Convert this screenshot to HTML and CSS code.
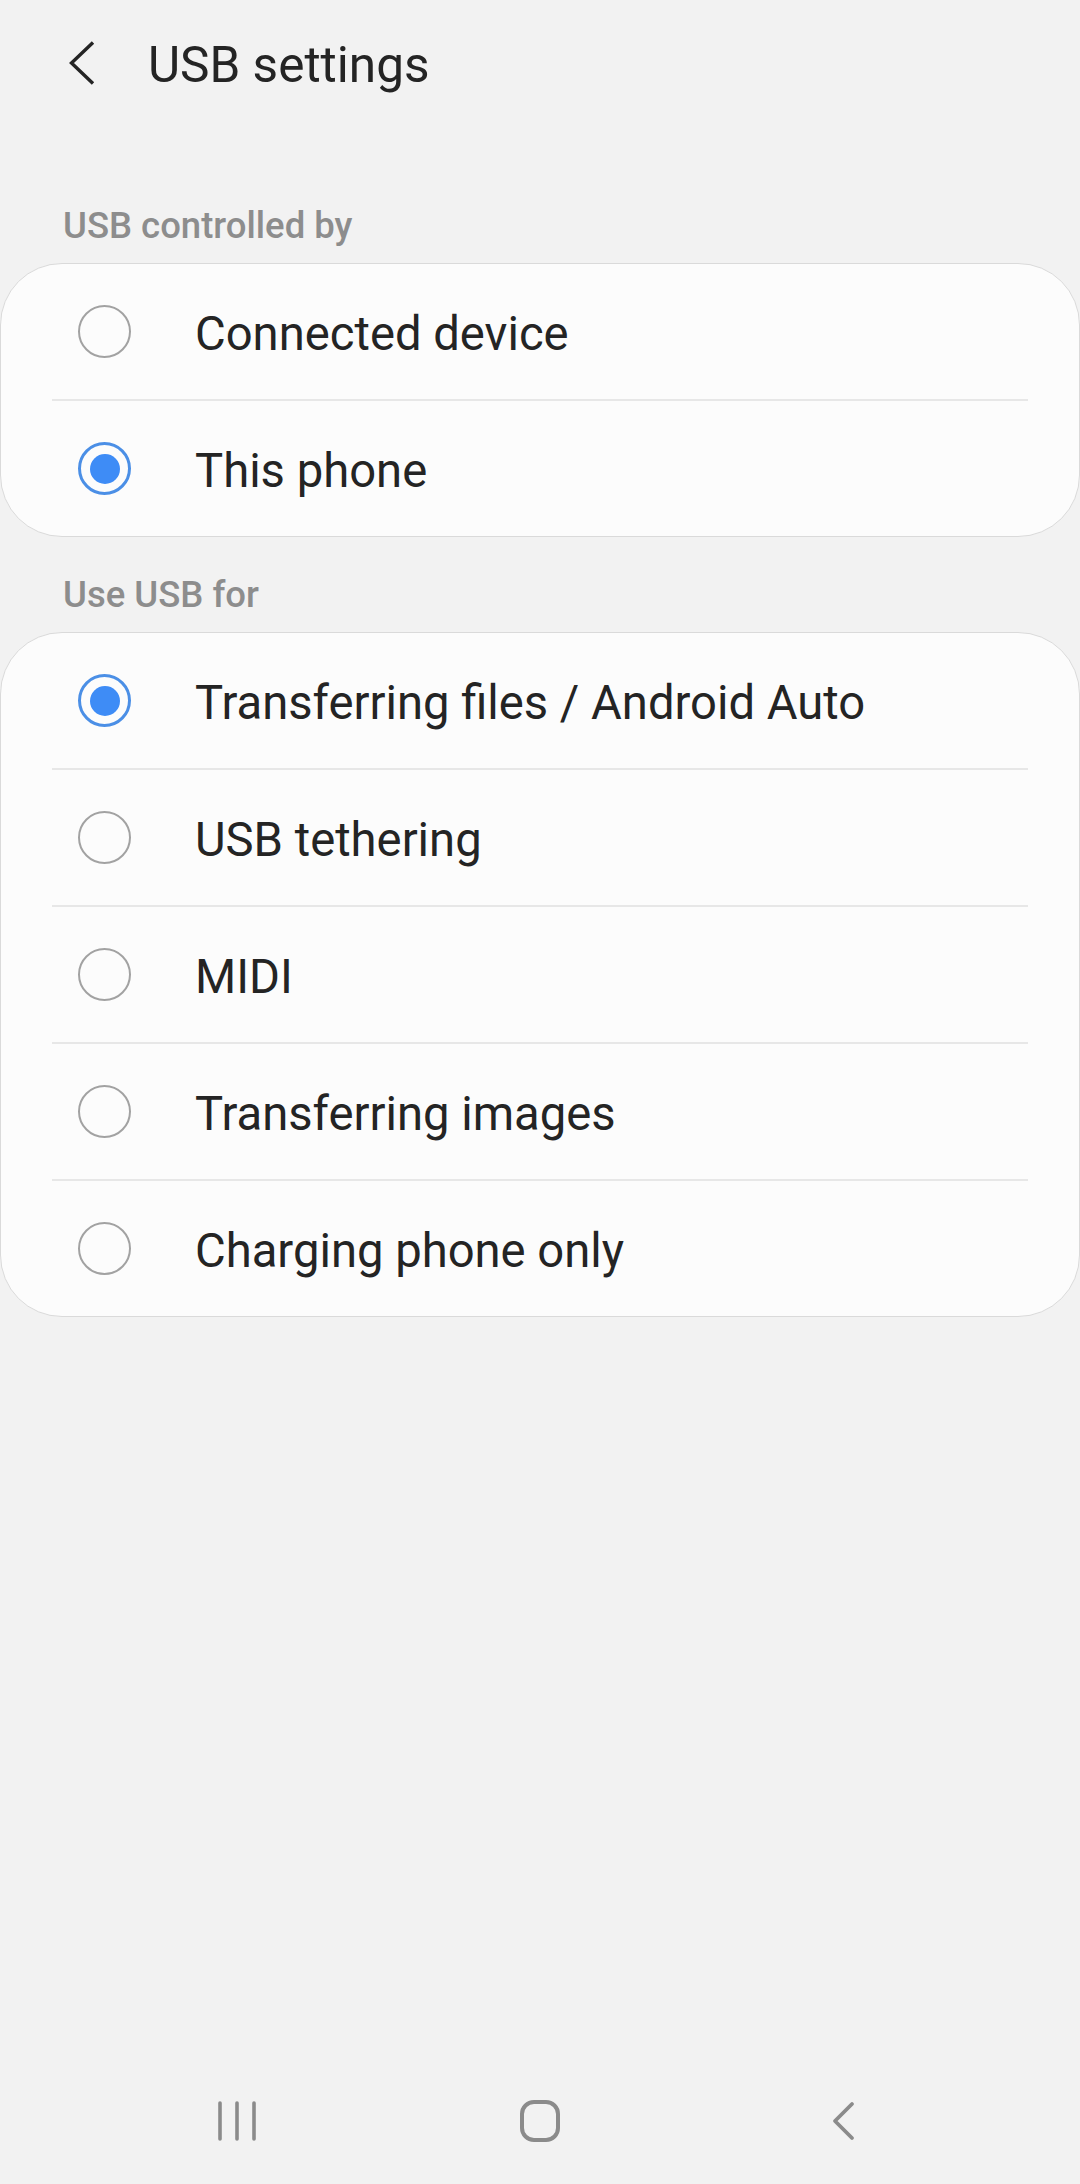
FILE: index.html
```html
<!DOCTYPE html>
<html lang="en">
<head>
<meta charset="utf-8">
<title>USB settings</title>
<link rel="stylesheet" href="styles.css">
</head>
<body>
<div class="screen">
  <main class="content">
    <header class="appbar">
      <svg class="back" width="28" height="46" viewBox="0 0 28 46" aria-hidden="true">
        <path d="M25 2.5 L3.5 23 L25 43.5" fill="none" stroke="#242424" stroke-width="3.4" stroke-linejoin="miter"/>
      </svg>
      <h1 class="title">USB settings</h1>
    </header>

    <h2 class="section-title first">USB controlled by</h2>
    <section class="card">
      <div class="row">
        <span class="radio"></span>
        <span class="label">Connected device</span>
      </div>
      <div class="divider"></div>
      <div class="row">
        <span class="radio checked"></span>
        <span class="label">This phone</span>
      </div>
    </section>

    <h2 class="section-title">Use USB for</h2>
    <section class="card">
      <div class="row">
        <span class="radio checked"></span>
        <span class="label">Transferring files / Android Auto</span>
      </div>
      <div class="divider"></div>
      <div class="row">
        <span class="radio"></span>
        <span class="label">USB tethering</span>
      </div>
      <div class="divider"></div>
      <div class="row">
        <span class="radio"></span>
        <span class="label">MIDI</span>
      </div>
      <div class="divider"></div>
      <div class="row">
        <span class="radio"></span>
        <span class="label">Transferring images</span>
      </div>
      <div class="divider"></div>
      <div class="row">
        <span class="radio"></span>
        <span class="label">Charging phone only</span>
      </div>
    </section>
  </main>

  <nav class="navbar">
    <div class="nav-cell">
      <svg width="40" height="42" viewBox="0 0 40 42" aria-hidden="true">
        <g stroke="#8b8b8b" stroke-width="3.6" stroke-linecap="round">
          <line x1="3" y1="3" x2="3" y2="39"/>
          <line x1="20" y1="3" x2="20" y2="39"/>
          <line x1="37" y1="3" x2="37" y2="39"/>
        </g>
      </svg>
    </div>
    <div class="nav-cell">
      <svg width="44" height="46" viewBox="0 0 44 46" aria-hidden="true">
        <rect x="4" y="4" width="36" height="38" rx="12" ry="12" fill="none" stroke="#8b8b8b" stroke-width="4"/>
      </svg>
    </div>
    <div class="nav-cell">
      <svg width="26" height="42" viewBox="0 0 26 42" aria-hidden="true">
        <path d="M22 4 L5 21 L22 38" fill="none" stroke="#8b8b8b" stroke-width="3.8" stroke-linecap="round" stroke-linejoin="round"/>
      </svg>
    </div>
  </nav>
</div>
</body>
</html>
```

FILE: styles.css
```css
* {
  box-sizing: border-box;
}

html, body {
  margin: 0;
  padding: 0;
  background: #f2f2f2;
}

body {
  font-family: Roboto, "Noto Sans", "Liberation Sans", sans-serif;
  color: #242424;
}

.screen {
  display: flex;
  flex-direction: column;
  width: 1080px;
  height: 2184px;
}

.content {
  flex: 1;
}

.appbar {
  display: flex;
  align-items: center;
  height: 130px;
  padding-left: 68px;
}

.back {
  display: block;
  margin-top: -5px;
}

.title {
  margin: 0 0 0 52px;
  font-size: 49.5px;
  line-height: 60px;
  font-weight: 400;
  color: #242424;
}

.section-title {
  margin: 36px 0 0 0;
  padding-left: 63px;
  font-size: 36.5px;
  line-height: 44px;
  font-weight: 500;
  color: #8d8d8d;
}

.section-title.first {
  margin-top: 74px;
}

.card {
  margin-top: 15px;
  background: #fcfcfc;
  border: 1px solid #dadada;
  border-radius: 62px;
}

.row {
  display: flex;
  align-items: center;
  height: 135px;
  padding-left: 77px;
}

.radio {
  flex: none;
  width: 53px;
  height: 53px;
  border-radius: 50%;
  border: 2.7px solid #a2a2a2;
  display: flex;
  align-items: center;
  justify-content: center;
}

.radio.checked {
  border: 3px solid #4b8fe6;
}

.radio.checked::after {
  content: "";
  width: 30px;
  height: 30px;
  border-radius: 50%;
  background: #3e8cf6;
}

.label {
  margin-left: 64px;
  padding-top: 5px;
  font-size: 47.2px;
  line-height: 56px;
  color: #242424;
  white-space: nowrap;
}

.divider {
  height: 2px;
  margin: 0 51px;
  background: #e7e7e7;
}

.navbar {
  flex: none;
  height: 126px;
  display: flex;
  justify-content: center;
  align-items: center;
}

.nav-cell {
  width: 303px;
  display: flex;
  justify-content: center;
  align-items: center;
}

.nav-cell svg {
  display: block;
}
```
